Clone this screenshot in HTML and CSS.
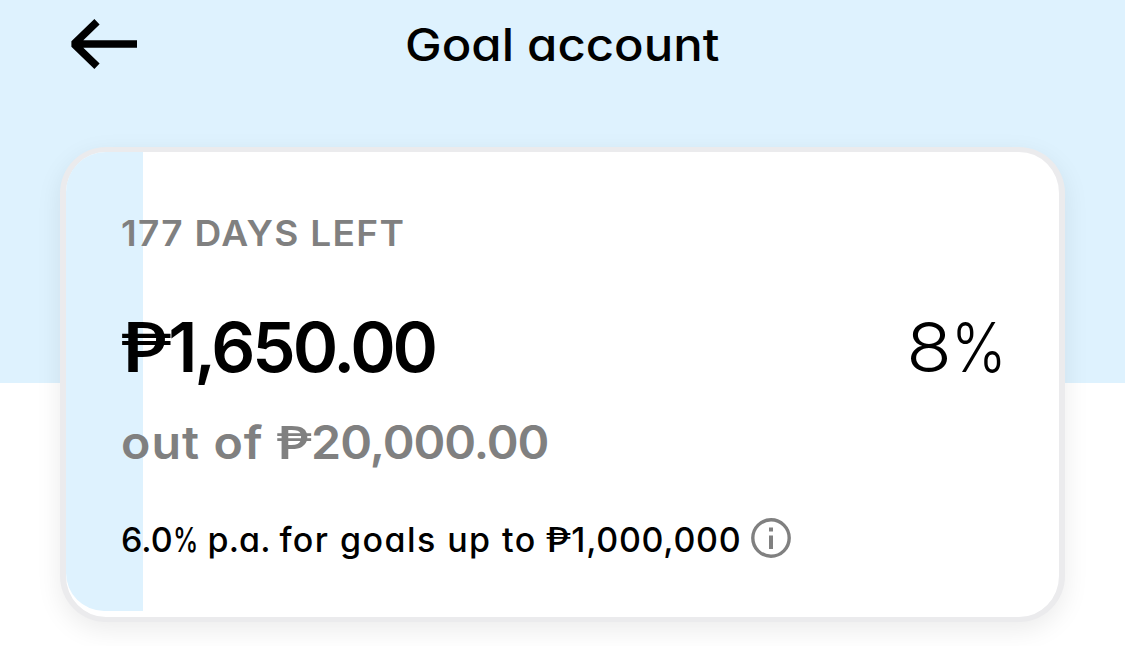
FILE: index.html
```html
<!DOCTYPE html>
<html lang="en">
<head>
    <meta charset="UTF-8">
    <meta name="viewport" content="width=device-width, initial-scale=1.0">
    <title>Goal account</title>
    <link rel="stylesheet" href="styles.css">
</head>
<body>
    <header class="topbar">
        <svg class="back" viewBox="0 0 68 52" width="68" height="52">
            <path d="M67 26H5M27 3.700L4 26L27 48.300" fill="none" stroke="#000" stroke-width="7.500" stroke-linejoin="bevel"/>
        </svg>
        <h1 class="title">Goal account</h1>
    </header>
    <main class="card">
        <div class="progress"></div>
        <div class="content">
            <p class="days">177 DAYS LEFT</p>
            <div class="balance">
                <span class="amount"><span class="peso">₱</span>1,650.00</span>
                <span class="percent"><span class="number">8</span><span class="sign">%</span></span>
            </div>
            <p class="target"><span class="out">out of </span><span class="peso">₱</span>20,000.00</p>
            <div class="rate">
                <span>6.0<span class="small-sign">%</span> <span class="pa">p.a. </span><span class="terms">for goals up to</span> <span class="limit"><span class="peso">₱</span>1,000,000</span></span>
                <svg class="info" viewBox="0 0 40 40" width="40" height="40">
                    <circle cx="20" cy="20" r="18.200" fill="none" stroke="#808080" stroke-width="3.400"/>
                    <path d="M20 9.500v4M20 17.500v13.500" stroke="#808080" stroke-width="4"/>
                </svg>
            </div>
        </div>
    </main>
</body>
</html>
```
FILE: styles.css
```css
*, *::before, *::after {
    box-sizing: border-box;
}

body {
    margin: 0;
    height: 646px;
    overflow: hidden;
    font-family: Inter, "Liberation Sans", sans-serif;
    font-feature-settings: "cv11";
    color: #000;
    background: linear-gradient(#def2fe 383px, #fff 383px);
}

h1, p {
    margin: 0;
    white-space: nowrap;
}

.topbar {
    display: grid;
    grid-template-columns: 138px 1fr 138px;
    align-items: center;
    height: 147px;
    padding-bottom: 59px;
}

.back {
    justify-self: end;
}

.title {
    justify-self: center;
    padding-top: 2px;
    font-size: 45px;
    line-height: 54px;
    font-weight: 550;
    transform: scaleX(1.09);
}

.card {
    position: relative;
    width: 1005px;
    height: 475px;
    margin: 0 60px;
    border: 5px solid #ebebed;
    border-width: 5px 6px;
    border-radius: 46px;
    background-color: #fff;
    box-shadow: 0 8px 26px rgba(0, 0, 0, 0.08);
}

/* filled part of the goal, sits behind the text */
.progress {
    position: absolute;
    top: 0;
    left: 0;
    width: 77px;
    height: 459px;
    background-color: #def2fe;
    border-radius: 40px 0 0 38px;
}

.content {
    position: relative;
    padding: 59px 52px 0 55px;
}

.days {
    font-size: 35px;
    line-height: 44px;
    font-weight: 600;
    letter-spacing: 1.2px;
    color: #808080;
    transform: scaleX(1.06);
    transform-origin: left;
}

.balance {
    display: flex;
    justify-content: space-between;
    margin-top: 50px;
    line-height: 84px;
    font-size: 69px;
}

.amount {
    font-weight: 600;
    letter-spacing: -3.1px;
}

.peso {
    display: inline-block;
    margin-right: 0.15em;
    font-family: Lato, Inter, sans-serif;
    line-height: 1;
    transform: scaleX(1.25);
    transform-origin: left;
}

.percent {
    font-weight: 300;
}

.number {
    display: inline-block;
    transform: scaleX(1.08);
}

.sign {
    display: inline-block;
    margin-left: -8px;
    transform: scaleX(0.86);
    transform-origin: right;
}

.target {
    margin-top: 25px;
    font-size: 46px;
    line-height: 56px;
    font-weight: 600;
    letter-spacing: -1px;
    color: #808080;
    transform: scaleX(1.05);
    transform-origin: left;
}

.out {
    letter-spacing: 1px;
}

.rate {
    display: flex;
    align-items: center;
    gap: 10px;
    margin-top: 48px;
    font-size: 34px;
    line-height: 44px;
    font-weight: 550;
    white-space: nowrap;
}

.small-sign {
    display: inline-block;
    margin-right: -8px;
    font-weight: 500;
    transform: scaleX(0.75);
    transform-origin: left;
}

.pa {
    letter-spacing: 0.1px;
}

.terms {
    letter-spacing: 1.45px;
}

.limit {
    letter-spacing: 0.7px;
}

.info {
    margin-bottom: 4px;
}
```
